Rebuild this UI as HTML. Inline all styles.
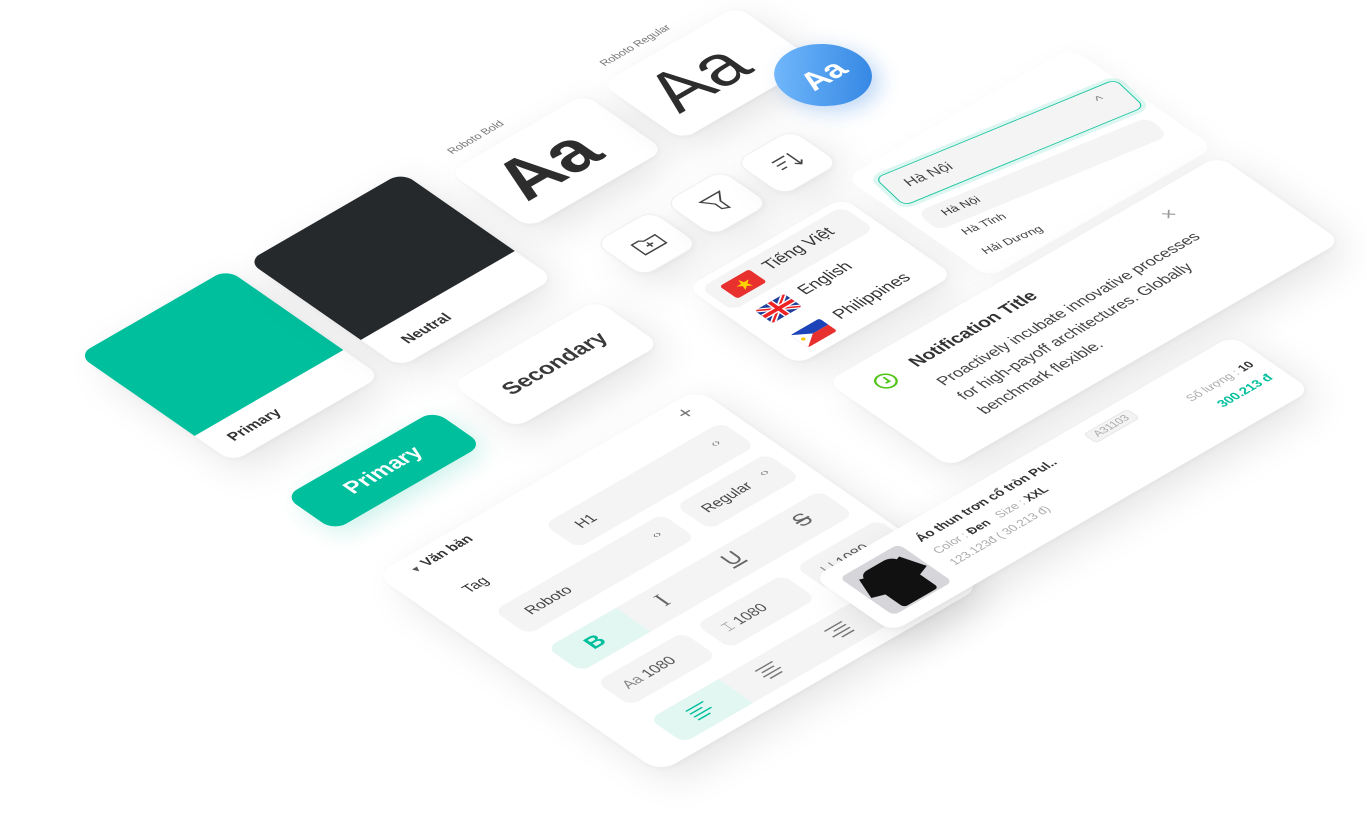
<!DOCTYPE html>
<html><head><meta charset="utf-8"><style>
*{margin:0;padding:0;box-sizing:border-box}
body{width:1367px;height:812px;background:#fff;overflow:hidden;position:relative;font-family:"Liberation Sans","Noto Sans CJK SC",sans-serif;color:#333}
#p{position:absolute;left:78px;top:355px;width:1000px;height:800px;transform-origin:0 0;transform:matrix(0.866,-0.5,0.82,0.57,0,0)}
#p div{position:absolute}
.card{background:#fff;border-radius:14px;box-shadow:0 18px 40px rgba(0,0,0,.10),0 2px 6px rgba(0,0,0,.04)}
.fld{background:#f4f4f4;border-radius:10px}
.lbl{font-size:11px;color:#777;white-space:nowrap}
.t{white-space:nowrap}
</style></head><body>
<div id="p">
<div class="card" style="left:0;top:0;width:172px;height:188px;overflow:hidden">
 <div style="left:0;top:0;width:172px;height:142px;background:#00bf9d"></div>
 <div class="t" style="left:20px;top:156px;font-size:15px;font-weight:bold;color:#333">Primary</div>
</div>
<div class="card" style="left:192px;top:4px;width:178px;height:186px;overflow:hidden">
 <div style="left:0;top:0;width:178px;height:138px;background:#26292c"></div>
 <div class="t" style="left:26px;top:155px;font-size:15px;font-weight:bold;color:#333">Neutral</div>
</div>
<div class="card" style="left:209px;top:234px;width:168px;height:78px">
 <div class="t" style="left:0;width:168px;top:25px;text-align:center;font-size:22px;font-weight:bold;color:#3a3a3a">Secondary</div>
</div>
<div style="left:2px;top:250px;width:172px;height:60px;background:#00bf9d;border-radius:14px;box-shadow:0 10px 24px rgba(0,191,157,.2)">
 <div class="t" style="left:0;width:172px;top:16px;text-align:center;font-size:22px;font-weight:bold;color:#fff">Primary</div>
</div>
<div class="lbl" style="left:418px;top:6px">Roboto Bold</div>
<div class="card" style="left:400px;top:30px;width:156px;height:98px">
 <div class="t" style="left:22px;top:12px;font-size:72px;font-weight:bold;color:#2d2d2d;line-height:1">Aa</div>
</div>
<div class="lbl" style="left:594px;top:6px">Roboto Regular</div>
<div class="card" style="left:576px;top:30px;width:156px;height:98px">
 <div class="t" style="left:22px;top:12px;font-size:72px;color:#2d2d2d;line-height:1">Aa</div>
</div>
<div style="left:683px;top:103px;width:82px;height:82px;border-radius:50%;background:linear-gradient(135deg,#7cc0ff,#2a7fe0);box-shadow:0 10px 20px rgba(42,127,224,.3)">
 <div class="t" style="left:0;width:82px;top:23px;text-align:center;font-size:32px;font-weight:bold;color:#fff">Aa</div>
</div>
<div class="card" style="left:427px;top:178px;width:66px;height:60px;border:1px solid #eee">
 <svg style="position:absolute;left:19px;top:18px" width="28" height="24" viewBox="0 0 28 24" fill="none" stroke="#444" stroke-width="1.6"><path d="M2 4h8l3 3h13v14H2z"/><path d="M14 10v7M10.5 13.5h7"/></svg>
</div>
<div class="card" style="left:508px;top:178px;width:66px;height:60px;border:1px solid #eee">
 <svg style="position:absolute;left:20px;top:16px" width="26" height="28" viewBox="0 0 26 28" fill="none" stroke="#444" stroke-width="1.6"><path d="M2 3h22l-8 10v11l-6-3v-8z"/></svg>
</div>
<div class="card" style="left:589px;top:178px;width:66px;height:60px;border:1px solid #eee">
 <svg style="position:absolute;left:19px;top:16px" width="28" height="28" viewBox="0 0 28 28" fill="none" stroke="#444" stroke-width="1.6"><path d="M3 5h14M3 11h10M3 17h6M21 4v18M17 18l4 4 4-4"/></svg>
</div>
<div class="card" style="left:445px;top:272px;width:180px;height:136px">
 <div class="fld" style="left:8px;top:8px;width:164px;height:40px"></div>
 <div style="left:22px;top:17px;width:34px;height:22px;background:#e8302f;border-radius:3px"><div class="t" style="left:10px;top:1px;color:#ffd400;font-size:15px">★</div></div>
 <div class="t" style="left:68px;top:15px;font-size:17px;color:#333">Tiếng Việt</div>
 <div style="left:22px;top:60px;width:34px;height:22px;border-radius:3px;overflow:hidden;background:#1f3f9a">
  <svg width="34" height="22" viewBox="0 0 34 22" style="position:absolute;left:0;top:0"><path d="M0 0L34 22M34 0L0 22" stroke="#fff" stroke-width="5"/><path d="M0 0L34 22M34 0L0 22" stroke="#e22" stroke-width="2"/><path d="M17 0v22M0 11h34" stroke="#fff" stroke-width="7"/><path d="M17 0v22M0 11h34" stroke="#e22" stroke-width="4"/></svg>
 </div>
 <div class="t" style="left:68px;top:58px;font-size:17px;color:#333">English</div>
 <div style="left:22px;top:103px;width:34px;height:22px;border-radius:3px;overflow:hidden">
  <svg width="34" height="22" viewBox="0 0 34 22" style="position:absolute;left:0;top:0"><rect width="34" height="11" fill="#1d43b8"/><rect y="11" width="34" height="11" fill="#e8302f"/><path d="M0 0L16 11L0 22z" fill="#fff"/><circle cx="5" cy="11" r="2" fill="#f5c400"/></svg>
 </div>
 <div class="t" style="left:68px;top:101px;font-size:17px;color:#333">Philippines</div>
</div>
<div class="card" style="left:645px;top:255px;width:260px;height:175px;box-shadow:0 12px 30px rgba(0,0,0,.05)"></div>
<div style="left:663px;top:271px;width:245px;height:44px;transform-origin:0 0;transform:rotate(9deg)">
 <div style="left:0;top:0;width:245px;height:44px;background:#f4f4f4;border:1.5px solid #1bc59f;border-radius:8px;box-shadow:0 0 0 4px rgba(27,197,159,.15)"></div>
 <div class="t" style="left:18px;top:12px;font-size:15px;color:#444">Hà Nội</div>
 <div class="t" style="left:215px;top:8px;font-size:15px;color:#888">^</div>
 <div class="fld" style="left:5px;top:56px;width:235px;height:30px"></div>
 <div class="t" style="left:22px;top:62px;font-size:12px;color:#333">Hà Nội</div>
 <div class="t" style="left:22px;top:92px;font-size:12px;color:#444">Hà Tĩnh</div>
 <div class="t" style="left:22px;top:122px;font-size:12px;color:#444">Hải Dương</div>
</div>
<div class="card" style="left:448px;top:440px;width:452px;height:150px">
 <div style="left:28px;top:22px;width:20px;height:20px;border:2px solid #52c41a;border-radius:50%"><div style="left:6px;top:3px;width:5px;height:8px;border-right:2px solid #52c41a;border-bottom:2px solid #52c41a"></div></div>
 <div class="t" style="left:70px;top:20px;font-size:18px;font-weight:bold;color:#333">Notification Title</div>
 <div class="t" style="left:362px;top:18px;font-size:20px;color:#999">×</div>
 <div style="left:70px;top:52px;width:320px;font-size:16px;line-height:25px;color:#444">Proactively incubate innovative processes for high-payoff architectures. Globally benchmark flexible.</div>
</div>
<div class="card" style="left:-12px;top:375px;width:372px;height:347px;border-radius:18px">
 <div class="t" style="left:26px;top:8px;font-size:14px;font-weight:bold;color:#333"><span style="font-size:10px;color:#555">▼</span> Văn bản</div>
 <div class="t" style="left:336px;top:4px;font-size:22px;color:#777">+</div>
 <div class="t" style="left:42px;top:57px;font-size:15px;color:#333">Tag</div>
 <div class="fld" style="left:152px;top:45px;width:205px;height:42px"><div class="t" style="left:20px;top:12px;font-size:15px;color:#444">H1</div><div class="t" style="left:178px;top:10px;font-size:12px;color:#777">‹›</div></div>
 <div class="fld" style="left:42px;top:100px;width:194px;height:42px"><div class="t" style="left:20px;top:12px;font-size:15px;color:#444">Roboto</div><div class="t" style="left:168px;top:10px;font-size:12px;color:#777">‹›</div></div>
 <div class="fld" style="left:252px;top:100px;width:105px;height:42px"><div class="t" style="left:14px;top:12px;font-size:15px;color:#444">Regular</div><div class="t" style="left:82px;top:10px;font-size:12px;color:#777">‹›</div></div>
 <div style="left:42px;top:165px;width:315px;height:42px;background:#f4f4f4;border-radius:10px;overflow:hidden">
  <div style="left:0;top:0;width:80px;height:42px;background:#e3f7f2"></div>
  <div class="t" style="left:28px;top:8px;font-size:22px;font-weight:bold;color:#00bf9d">B</div>
  <div class="t" style="left:112px;top:6px;font-size:24px;font-family:'Liberation Serif',serif;color:#666">I</div>
  <div class="t" style="left:190px;top:4px;font-size:22px;color:#666;text-decoration:underline">U</div>
  <div class="t" style="left:270px;top:6px;font-size:22px;color:#666;text-decoration:line-through">S</div>
 </div>
 <div class="fld" style="left:42px;top:225px;width:100px;height:42px"><div class="t" style="left:14px;top:12px;font-size:15px;color:#555"><span style="color:#888">Aa</span> 1080</div></div>
 <div class="fld" style="left:157px;top:225px;width:100px;height:42px"><div class="t" style="left:14px;top:12px;font-size:15px;color:#555"><span style="color:#888">⌶</span> 1080</div></div>
 <div class="fld" style="left:272px;top:225px;width:95px;height:42px"><div class="t" style="left:14px;top:12px;font-size:15px;color:#555"><span style="color:#888">|-|</span> 1080</div></div>
 <div style="left:42px;top:290px;width:315px;height:42px;background:#f4f4f4;border-radius:10px;overflow:hidden">
  <div style="left:0;top:0;width:80px;height:42px;background:#e3f7f2"></div>
  <svg style="position:absolute;left:28px;top:11px" width="24" height="20" stroke="#00bf9d" stroke-width="1.6"><path d="M2 2h20M2 7h14M2 12h20M2 17h14"/></svg>
  <svg style="position:absolute;left:108px;top:11px" width="24" height="20" stroke="#777" stroke-width="1.6"><path d="M2 2h20M5 7h14M2 12h20M5 17h14"/></svg>
  <svg style="position:absolute;left:188px;top:11px" width="24" height="20" stroke="#777" stroke-width="1.6"><path d="M2 2h20M8 7h14M2 12h20M8 17h14"/></svg>
 </div>
</div>
<div class="card" style="left:262px;top:620px;width:484px;height:96px">
 <div style="left:16px;top:15px;width:68px;height:66px;background:#d6d6da;border-radius:6px;overflow:hidden">
  <div style="left:14px;top:8px;width:40px;height:56px;background:#111;border-radius:10px 10px 4px 4px"></div>
  <div style="left:6px;top:14px;width:14px;height:26px;background:#111;transform:rotate(20deg)"></div>
  <div style="left:48px;top:14px;width:14px;height:26px;background:#111;transform:rotate(-20deg)"></div>
 </div>
 <div class="t" style="left:100px;top:14px;font-size:13px;font-weight:bold;color:#333">Áo thun trơn cổ tròn Pul..</div>
 <div class="t" style="left:300px;top:12px;font-size:11px;color:#aaa;background:#f3f3f3;border:1px solid #e6e6e6;border-radius:4px;padding:1px 6px">A31103</div>
 <div class="t" style="left:100px;top:36px;font-size:12px;color:#aaa">Color : <b style="color:#333">Đen</b> &nbsp; Size : <b style="color:#333">XXL</b></div>
 <div class="t" style="left:100px;top:56px;font-size:12px;color:#aaa">123.123đ ( 30.213 đ)</div>
 <div class="t" style="left:385px;top:30px;width:86px;text-align:right;font-size:12px;color:#aaa">Số lượng : <b style="color:#333">10</b></div>
 <div class="t" style="left:385px;top:52px;width:86px;text-align:right;font-size:13px;font-weight:bold;color:#00bf9d">300.213 đ</div>
</div>
</div>
</body></html>
